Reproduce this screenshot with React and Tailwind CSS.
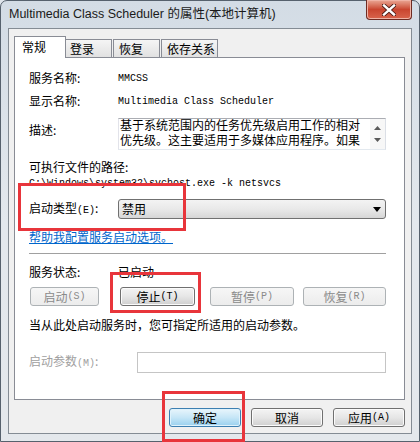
import React from 'react';

const CJK = "font-['Noto_Sans_CJK_SC',sans-serif]";

function M({ children }) {
  return <span className="font-['Liberation_Mono',monospace] text-[10px]">{children}</span>;
}

function Button({ w, disabled, primary, children }) {
  let look = 'border-[#707070] bg-gradient-to-b from-[#f4f4f4] via-[#e6e6e6] to-[#cfcfcf] text-black shadow-[inset_0_0_0_1px_#fbfbfb]';
  if (disabled) look = 'border-[#adb2b5] bg-gradient-to-b from-[#f6f6f6] to-[#ececec] text-[#8a8a8a]';
  if (primary) look = 'border-[#3c7fb1] bg-gradient-to-b from-[#e8f5fc] via-[#c6e6f7] to-[#98d0ee] text-black shadow-[inset_0_0_0_1px_#dff2fc]';
  return (
    <div className={`flex h-[19px] shrink-0 items-center justify-center rounded-[3px] border ${look} ${w} ${CJK} text-[12px] leading-[16px]`}>
      {children}
    </div>
  );
}

function Row({ mt, h = 'h-[16px]', children }) {
  return <div className={`flex items-center ${mt} ${h}`}>{children}</div>;
}

function Label({ children, muted }) {
  return (
    <div className={`w-[89px] shrink-0 ${CJK} text-[12px] leading-[16px] ${muted ? 'text-[#a0a0a0]' : 'text-black'}`}>
      {children}
    </div>
  );
}

export default function App() {
  return (
    <div className="relative h-[442px] w-[420px] overflow-hidden bg-[#dfe5eb]">
      <div className="flex h-[442px] w-[420px] flex-col rounded-t-[7px] border border-[#56616d] bg-gradient-to-b from-[#d3dce5] via-[#e3e8ed] to-[#e4e8ec] px-[7px] pb-[7px]">
        {/* title bar */}
        <div className="flex h-[27px] items-start justify-between">
          <div className="pl-[1px] pt-[4px] font-['Liberation_Sans','Noto_Sans_CJK_SC',sans-serif] text-[12.5px] leading-[18px] text-[#1a1a1a]">
            Multimedia Class Scheduler 的属性(本地计算机)
          </div>
          <div className="-mt-px flex h-[20px] w-[46px] items-center justify-center rounded-b-[4px] border border-t-0 border-[#6e2b22] bg-gradient-to-b from-[#e9a795] via-[#c9452f] to-[#d9644c] shadow-[inset_0_0_0_1px_#f0b3a5]">
            <svg width="14" height="12" viewBox="0 0 14 12">
              <path d="M2 1.5 L12 10.5 M12 1.5 L2 10.5" stroke="#4a1a14" strokeWidth="4.2" strokeLinecap="square" />
              <path d="M2 1.5 L12 10.5 M12 1.5 L2 10.5" stroke="#ffffff" strokeWidth="2.4" strokeLinecap="square" />
            </svg>
          </div>
        </div>

        {/* client area */}
        <div className="flex flex-1 flex-col border border-[#848c94] bg-[#f0f0f0] pb-[6px] pl-[5px] pr-[6px] pt-[7px]">
          {/* tabs */}
          <div className={`flex h-[21px] items-end ${CJK} text-[12px] leading-[16px] text-black`}>
            <div className="relative z-10 -mb-px h-[22px] w-[52px] border border-b-0 border-[#898c95] bg-white pl-[7px] pt-[2px]">常规</div>
            <div className="-ml-px h-[18px] w-[47px] border border-b-0 border-[#898c95] bg-gradient-to-b from-[#f5f5f5] to-[#e1e1e1] pl-[4px] pt-px">登录</div>
            <div className="ml-px h-[18px] w-[47px] border border-b-0 border-[#898c95] bg-gradient-to-b from-[#f5f5f5] to-[#e1e1e1] pl-[5px] pt-px">恢复</div>
            <div className="ml-px h-[18px] w-[57px] border border-b-0 border-[#898c95] bg-gradient-to-b from-[#f5f5f5] to-[#e1e1e1] pl-[5px] pt-px">依存关系</div>
          </div>

          {/* tab panel */}
          <div className="flex h-[343px] flex-col border border-[#898c95] bg-white pl-[14px] pr-[18px]">
            <Row mt="mt-[12px]">
              <Label>服务名称:</Label>
              <M>MMCSS</M>
            </Row>
            <Row mt="mt-[7px]">
              <Label>显示名称:</Label>
              <M>Multimedia Class Scheduler</M>
            </Row>
            <div className="mt-[9px] flex h-[32px] items-start">
              <div className="mt-[4px]">
                <Label>描述:</Label>
              </div>
              <div className="flex h-[32px] flex-1 border border-[#abadb3] border-r-[#dbdfe6] border-b-[#e3e9ef] border-l-[#e2e3ea]">
                <div className={`flex-1 overflow-hidden pl-px ${CJK} text-[12px] leading-[15px] text-black`}>
                  <div className="-mt-[2px] whitespace-nowrap">基于系统范围内的任务优先级启用工作的相对</div>
                  <div className="whitespace-nowrap">优先级。这主要适用于多媒体应用程序。如果</div>
                </div>
                <div className="flex w-[15px] flex-col items-center justify-between bg-[#f7f7f7] py-[7px]">
                  <svg width="7" height="4" viewBox="0 0 7 4"><path d="M0 4 L3.5 0 L7 4 Z" fill="#5a5a5a" /></svg>
                  <svg width="7" height="4" viewBox="0 0 7 4"><path d="M0 0 L3.5 4 L7 0 Z" fill="#5a5a5a" /></svg>
                </div>
              </div>
            </div>
            <Row mt="mt-[9px]">
              <div className={`${CJK} text-[12px] leading-[16px] text-black`}>可执行文件的路径:</div>
            </Row>
            <Row mt="mt-0">
              <M>C:\Windows\system32\svchost.exe -k netsvcs</M>
            </Row>
            <Row mt="mt-[8px]" h="h-[20px]">
              <Label>
                启动类型<M>(E)</M>:
              </Label>
              <div className={`flex h-[20px] flex-1 items-center justify-between rounded-[3px] border border-[#707070] bg-gradient-to-b from-[#f3f3f3] via-[#e9e9e9] to-[#d6d6d6] pl-[3px] pr-[4px] ${CJK} text-[12px] leading-[16px] text-black`}>
                <span>禁用</span>
                <svg width="8" height="5" viewBox="0 0 8 5"><path d="M0 0 L8 0 L4 5 Z" fill="#000" /></svg>
              </div>
            </Row>
            <Row mt="mt-[10px]">
              <span className={`${CJK} text-[12px] leading-[16px] text-[#0066cc] underline`}>帮助我配置服务启动选项。</span>
            </Row>
            <div className="mt-[8px] h-px bg-[#a0a0a0]" />
            <Row mt="mt-[10px]">
              <Label>服务状态:</Label>
              <div className={`${CJK} text-[12px] leading-[16px] text-black`}>已启动</div>
            </Row>
            <div className="mt-[7px] flex h-[19px]">
              <div className="ml-px">
                <Button w="w-[69px]" disabled>启动<M>(S)</M></Button>
              </div>
              <div className="ml-[21px]">
                <Button w="w-[75px]">停止<M>(T)</M></Button>
              </div>
              <div className="ml-[15px]">
                <Button w="w-[84px]" disabled>暂停<M>(P)</M></Button>
              </div>
              <div className="ml-[9px]">
                <Button w="w-[83px]" disabled>恢复<M>(R)</M></Button>
              </div>
            </div>
            <Row mt="mt-[11px]">
              <div className={`${CJK} text-[12px] leading-[16px] text-black`}>当从此处启动服务时，您可指定所适用的启动参数。</div>
            </Row>
            <div className="mt-[19px] flex h-[21px] items-center">
              <div className={`w-[108px] shrink-0 ${CJK} text-[12px] leading-[16px] text-[#a0a0a0]`}>
                启动参数<M>(M)</M>:
              </div>
              <div className="h-[21px] flex-1 border border-[#c5c5c5] bg-white" />
            </div>
          </div>

          {/* dialog buttons */}
          <div className="mt-[8px] flex h-[19px] justify-end gap-[10px]">
            <Button w="w-[72px]" primary>确定</Button>
            <Button w="w-[72px]">取消</Button>
            <Button w="w-[72px]">应用<M>(A)</M></Button>
          </div>
        </div>
      </div>

      {/* red annotation boxes */}
      <div className="absolute left-[18px] top-[183px] h-[48px] w-[168px] border-[3px] border-[#e8353b]" />
      <div className="absolute left-[110px] top-[272px] h-[41px] w-[91px] border-[3px] border-[#e8353b]" />
      <div className="absolute left-[162px] top-[391px] h-[51px] w-[83px] border-[3px] border-[#e8353b]" />
    </div>
  );
}
